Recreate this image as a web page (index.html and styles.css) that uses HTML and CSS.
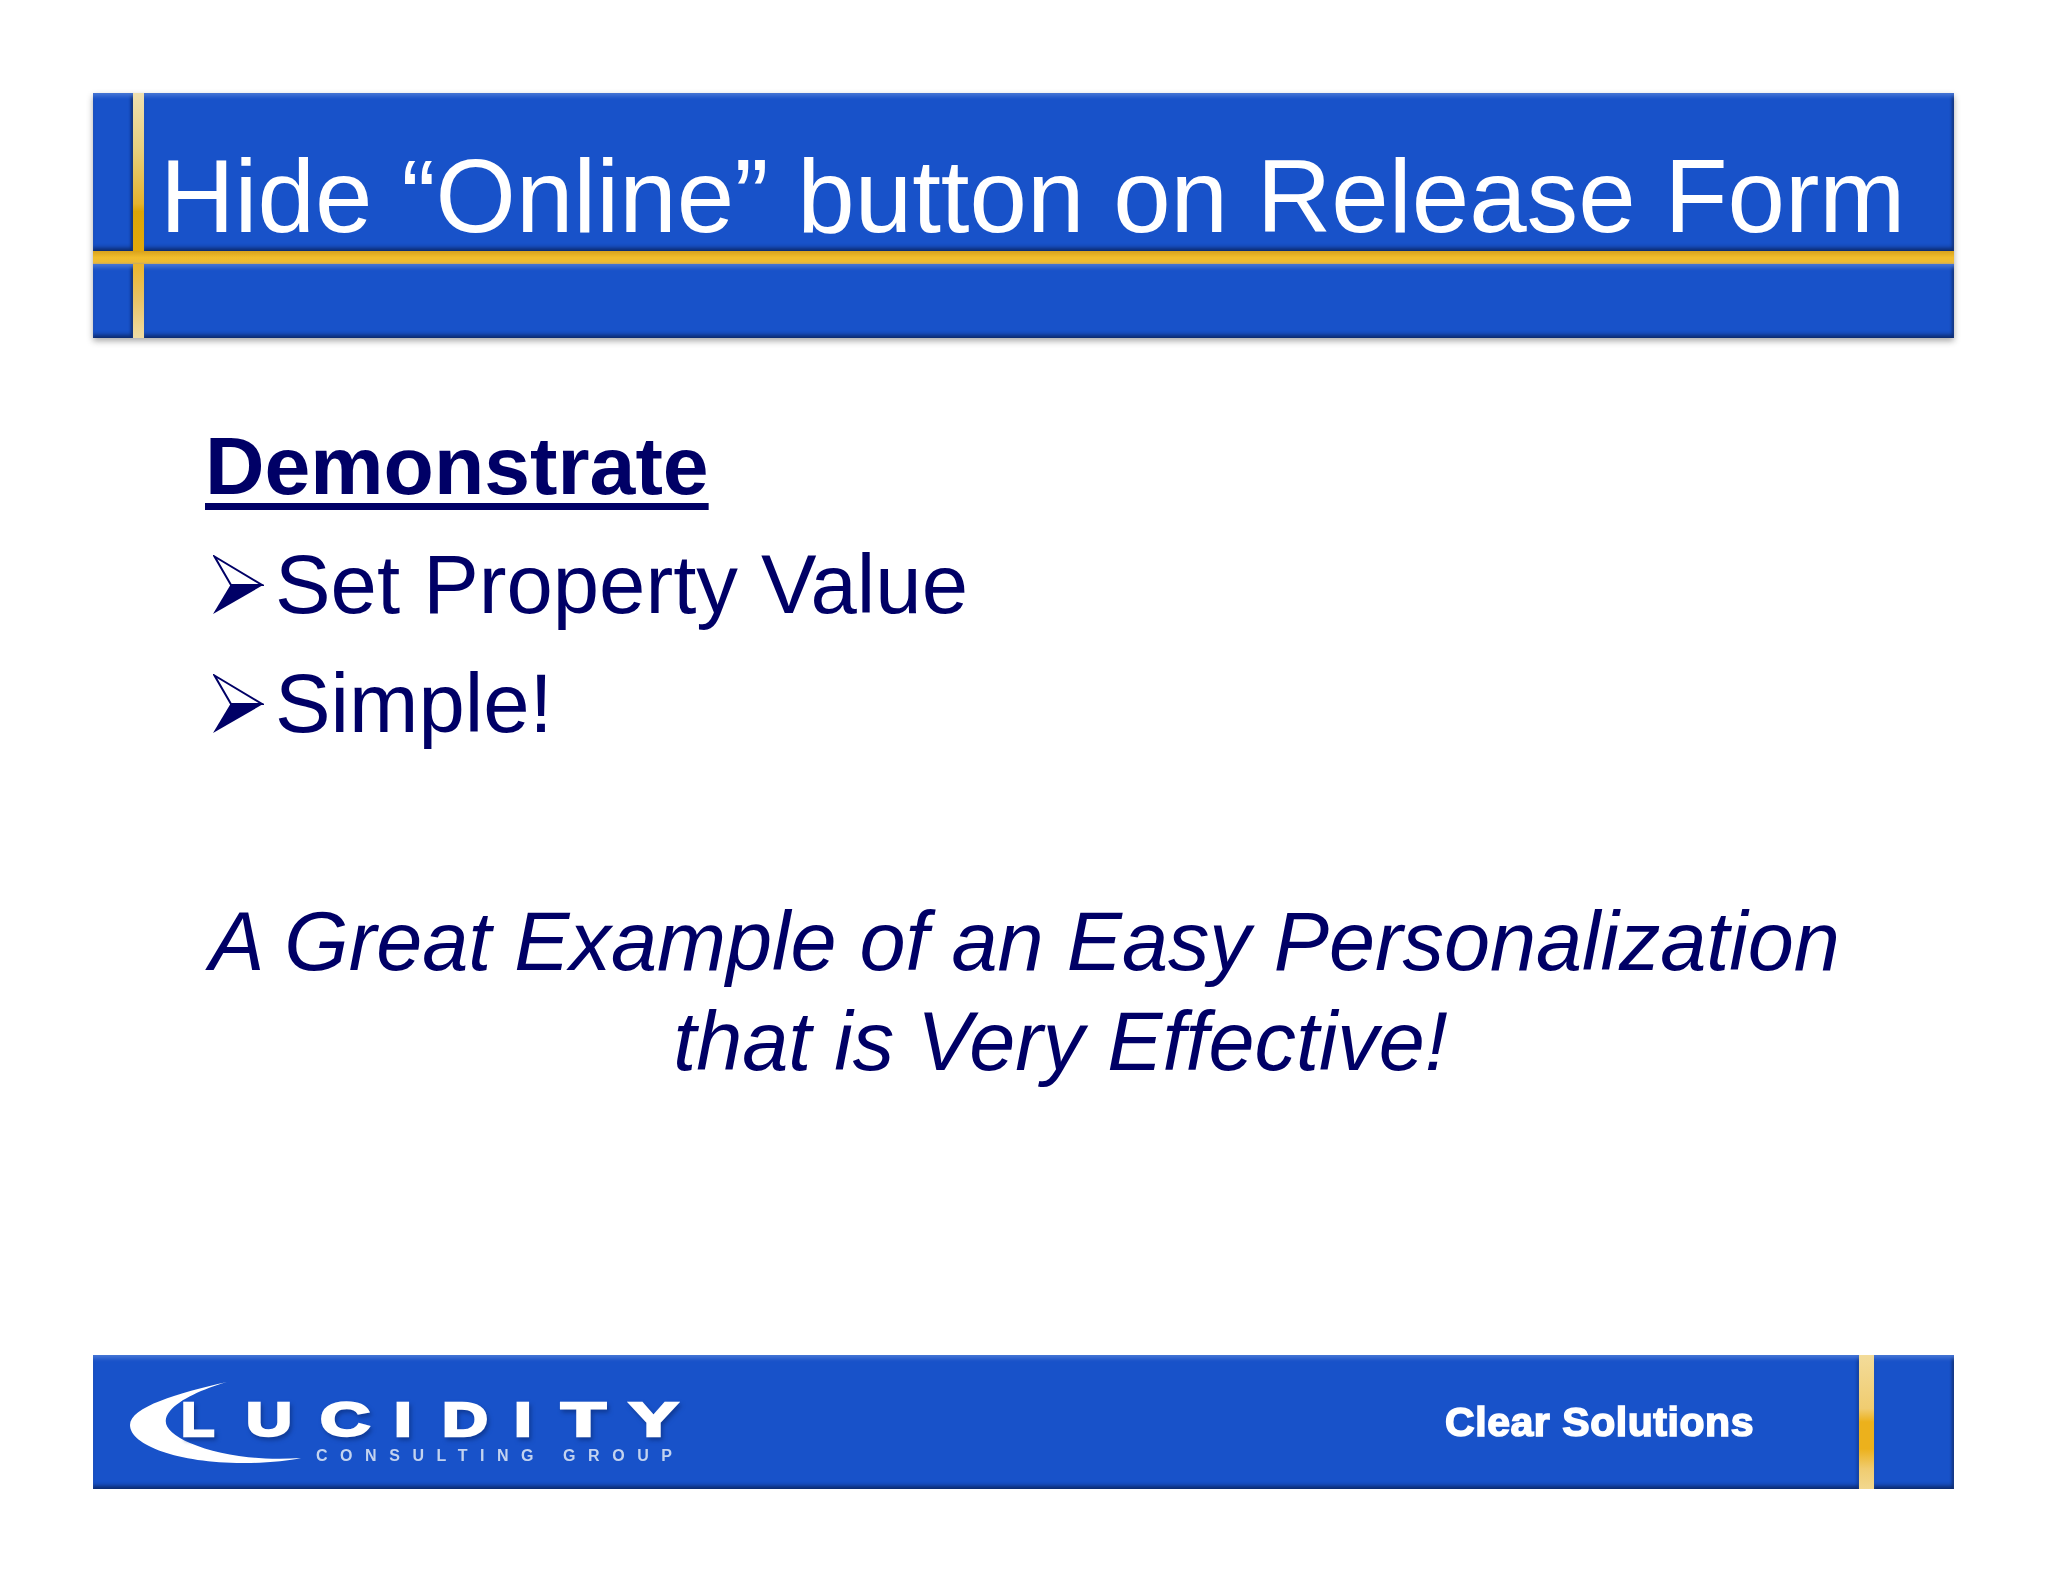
FILE: index.html
```html
<!DOCTYPE html>
<html lang="en">
<head>
<meta charset="utf-8">
<title>Hide Online button on Release Form</title>
<link rel="stylesheet" href="styles.css">
</head>
<body>
<div class="slide">
  <header class="header">
    <div class="cell c1"></div>
    <div class="vgold vgold-top"></div>
    <div class="cell c2"><h1 class="title">Hide “Online” button on Release Form</h1></div>
    <div class="hgold"></div>
    <div class="cell c3"></div>
    <div class="vgold vgold-bottom"></div>
    <div class="cell c4"></div>
  </header>
  <main class="body">
    <h2 class="heading">Demonstrate</h2>
    <ul class="bullets">
      <li class="bullet">
        <svg class="arrow" viewBox="0 0 51 59" aria-hidden="true"><path d="M1.5 1.5 L49 30 L18 30 Z" fill="#fff" stroke="#000066" stroke-width="2" stroke-linejoin="miter"/><path d="M0 59 L18 29 L51 29.5 Z" fill="#000066"/></svg>
        <span>Set Property Value</span>
      </li>
      <li class="bullet">
        <svg class="arrow" viewBox="0 0 51 59" aria-hidden="true"><path d="M1.5 1.5 L49 30 L18 30 Z" fill="#fff" stroke="#000066" stroke-width="2" stroke-linejoin="miter"/><path d="M0 59 L18 29 L51 29.5 Z" fill="#000066"/></svg>
        <span>Simple!</span>
      </li>
    </ul>
    <p class="note">A Great Example of an Easy Personalization<br><span class="note-second">that is Very Effective!</span></p>
  </main>
  <footer class="footer">
    <div class="cell f1">
      <svg class="logo" viewBox="0 0 560 90" aria-label="Lucidity Consulting Group">
        <path class="crescent" d="M99 5 C50 16 2 30 2 48 C2 68 50 86 115 86 C140 86 160 84 173 81 C130 84 90 78 62 66 C40 56 32 46 42 34 C52 22 75 12 99 5 Z"/>
        <g class="word">
          <text transform="translate(53 59) scale(1.12 1)" x="0">L</text>
          <text transform="translate(118 59) scale(1.3 1)" x="0">U</text>
          <text transform="translate(192 59) scale(1.42 1)" x="0">C</text>
          <text transform="translate(266 59) scale(1.3 1)" x="0">I</text>
          <text transform="translate(314 59) scale(1.3 1)" x="0">D</text>
          <text transform="translate(386 59) scale(1.3 1)" x="0">I</text>
          <text transform="translate(433 59) scale(1.5 1)" x="0">T</text>
          <text transform="translate(501 59) scale(1.5 1)" x="0">Y</text>
        </g>
        <text class="sub" x="188" y="84" textLength="356" lengthAdjust="spacing">CONSULTING GROUP</text>
      </svg>
      <span class="tagline">Clear Solutions</span>
    </div>
    <div class="vgold vgold-foot"></div>
    <div class="cell f2"></div>
  </footer>
</div>
</body>
</html>
```
FILE: styles.css
```css
html, body {
  margin: 0;
  background: #fff;
}

body {
  font-family: "Liberation Sans", Arial, sans-serif;
  color: #000066;
}

.slide {
  box-sizing: border-box;
  padding: 93px 94px 0 93px;
  height: 1489px;
  display: flex;
  flex-direction: column;
}

.cell {
  background: #1852c9;
  box-shadow:
    inset 0 5px 4px -2px #4a78d6,
    inset 0 -5px 4px -2px #0c2a6b,
    inset -3px 0 3px -1px #123f9e;
}

.header {
  display: grid;
  grid-template-columns: 40px 11px 1fr;
  grid-template-rows: 158px 13px 74px;
  filter: drop-shadow(0 3px 3px rgba(60, 60, 60, 0.45));
}

.c1 { grid-column: 1; grid-row: 1; }
.c2 { grid-column: 3; grid-row: 1; display: flex; }
.c3 { grid-column: 1; grid-row: 3; }
.c4 { grid-column: 3; grid-row: 3; }

.c1, .c3 {
  box-shadow:
    inset 0 5px 4px -2px #4a78d6,
    inset 0 -5px 4px -2px #0c2a6b,
    inset -3px 0 3px -1px #0c2a6b;
}

.c2, .c4, .f2 {
  box-shadow:
    inset 0 5px 4px -2px #4a78d6,
    inset 0 -5px 4px -2px #0c2a6b,
    inset -3px 0 3px -1px #0f2f78;
}

.hgold {
  grid-column: 1 / -1;
  grid-row: 2;
  background: linear-gradient(#d9a21c, #f1bd2c 50%, #eebb33 85%, #c7a860);
}

.vgold {
  background: #eab72d;
}

.vgold-top {
  grid-column: 2;
  grid-row: 1;
  background: linear-gradient(#efe0b0 0, #e8d07f 35%, #e4b32f 70%, #dba406 75%, #e3a90b 100%);
}

.vgold-bottom {
  grid-column: 2;
  grid-row: 3;
  background: linear-gradient(#eab52c, #e8c468 50%, #efdca4);
}

.title {
  margin: 0;
  padding: 36px 0 0 16px;
  font-weight: 400;
  font-size: 103.3px;
  line-height: 135px;
  color: #fff;
  white-space: nowrap;
}

.body {
  padding: 68px 0 0 112px;
  flex: 1;
}

.heading {
  margin: 0;
  font-size: 82.4px;
  line-height: 119px;
  font-weight: 700;
  text-decoration: underline;
  text-decoration-thickness: 7px;
  text-underline-offset: 9px;
  text-decoration-skip-ink: none;
}

.bullets {
  list-style: none;
  margin: 0;
  padding: 0;
}

.bullet {
  display: flex;
  align-items: center;
  height: 119px;
  font-size: 83.3px;
  gap: 11px;
  padding-left: 8px;
}

.arrow {
  width: 51px;
  height: 59px;
  flex: none;
}

.note {
  margin: 129px 0 0 -110px;
  font-style: italic;
  font-size: 82.8px;
  line-height: 100px;
  text-align: center;
  white-space: nowrap;
}

.note-second {
  padding-left: 72px;
}

.footer {
  display: grid;
  grid-template-columns: 1fr 15px 80px;
  height: 134px;
}

.f1 {
  display: flex;
  align-items: center;
  justify-content: space-between;
  padding: 0 105px 0 35px;
}

.logo {
  width: 560px;
  height: 90px;
  filter: blur(0.6px);
}

.crescent {
  fill: #fff;
}

.word {
  filter: drop-shadow(2px 3px 2px #0f3a96);
}

.word text {
  font-family: "Liberation Sans", Arial, sans-serif;
  font-weight: 700;
  font-size: 49px;
  fill: #fff;
  stroke: #fff;
  stroke-width: 2.5px;
}

.sub {
  font-family: "Liberation Sans", Arial, sans-serif;
  font-size: 16px;
  font-weight: 700;
  fill: #c3d3ef;
}

.tagline {
  font-size: 41px;
  font-weight: 700;
  letter-spacing: 0.55px;
  color: #fff;
  -webkit-text-stroke: 1.6px #fff;
  filter: blur(0.6px);
  white-space: nowrap;
}

.vgold-foot {
  background: linear-gradient(#f3dc9a 0, #f0cc70 40%, #ecb11c 50%, #ecb11c 70%, #f0cc70 85%, #f2d88e 100%);
}
```
